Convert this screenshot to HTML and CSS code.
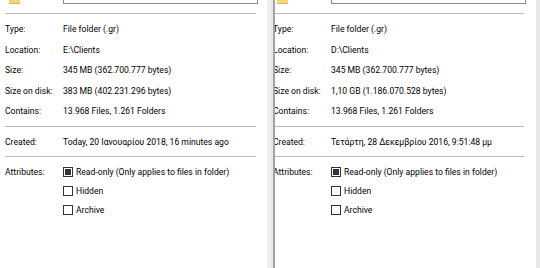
FILE: index.html
```html
<!DOCTYPE html>
<html lang="en">
<head>
    <meta charset="UTF-8">
    <title>Folder Properties</title>
    <link rel="stylesheet" href="styles.css">
</head>
<body>
    <div class="window">
        <!-- Left: E:\Clients -->
        <div class="panel">
            <div class="inner">
                <div class="head">
                    <div class="folder"></div>
                    <div class="namebox"></div>
                </div>
                <div class="line"></div>
                <div class="group">
                    <div class="row"><span class="label">Type:</span><span>File folder (.gr)</span></div>
                    <div class="row"><span class="label">Location:</span><span>E:\Clients</span></div>
                    <div class="row"><span class="label">Size:</span><span>345 MB (362.700.777 bytes)</span></div>
                    <div class="row"><span class="label">Size on disk:</span><span>383 MB (402.231.296 bytes)</span></div>
                    <div class="row"><span class="label">Contains:</span><span>13.968 Files, 1.261 Folders</span></div>
                </div>
                <div class="line"></div>
                <div class="group">
                    <div class="row"><span class="label">Created:</span><span>Today, 20 Ιανουαρίου 2018, 16 minutes ago</span></div>
                </div>
                <div class="line"></div>
                <div class="attrs">
                    <span class="label">Attributes:</span>
                    <div class="checks">
                        <div class="check"><span class="box mixed"></span>Read-only (Only applies to files in folder)</div>
                        <div class="check"><span class="box"></span>Hidden</div>
                        <div class="check"><span class="box"></span>Archive</div>
                    </div>
                </div>
            </div>
        </div>

        <div class="splitter"></div>

        <!-- Right: D:\Clients -->
        <div class="panel right">
            <div class="inner">
                <div class="head">
                    <div class="folder"></div>
                    <div class="namebox"></div>
                </div>
                <div class="line"></div>
                <div class="group">
                    <div class="row"><span class="label">Type:</span><span>File folder (.gr)</span></div>
                    <div class="row"><span class="label">Location:</span><span>D:\Clients</span></div>
                    <div class="row"><span class="label">Size:</span><span>345 MB (362.700.777 bytes)</span></div>
                    <div class="row"><span class="label">Size on disk:</span><span>1,10 GB (1.186.070.528 bytes)</span></div>
                    <div class="row"><span class="label">Contains:</span><span>13.968 Files, 1.261 Folders</span></div>
                </div>
                <div class="line"></div>
                <div class="group">
                    <div class="row"><span class="label">Created:</span><span>Τετάρτη, 28 Δεκεμβρίου 2016, 9:51:48 μμ</span></div>
                </div>
                <div class="line"></div>
                <div class="attrs">
                    <span class="label">Attributes:</span>
                    <div class="checks">
                        <div class="check"><span class="box mixed"></span>Read-only (Only applies to files in folder)</div>
                        <div class="check"><span class="box"></span>Hidden</div>
                        <div class="check"><span class="box"></span>Archive</div>
                    </div>
                </div>
            </div>
        </div>

        <div class="edge"></div>
    </div>
</body>
</html>
```

FILE: styles.css
```css
body {
    margin: 0;
    background: #fff;
    font-family: Roboto, "Noto Sans", sans-serif;
    font-size: 8.6px;
    color: #000;
}

.window {
    display: flex;
    height: 268px;
    overflow: hidden;
}

.panel {
    width: 267px;
    overflow: hidden;
    flex-shrink: 0;
}

.panel.right {
    width: 261px;
}

.panel.right .inner {
    margin-left: -7px;
}

.inner {
    width: 267px;
}

.splitter {
    width: 8px;
    flex-shrink: 0;
    background: linear-gradient(to right, #f4f4f4 0, #e9e9e9 2px, #f1f1f1 3px, #e6e6e6 5px, #ededed 6px, #a2a2a2 6px, #a2a2a2 8px);
}

.edge {
    width: 4px;
    flex-shrink: 0;
    background: #e8e8e8;
}

.head {
    height: 4px;
    display: flex;
    align-items: flex-end;
}

.folder {
    width: 11px;
    height: 4px;
    margin-left: 9px;
    background: #f5d57a;
    border-bottom: 1px solid #e2b84c;
    box-sizing: border-box;
}

.namebox {
    width: 195px;
    height: 20px;
    margin-left: 43px;
    border: 1px solid #8a8a8a;
    box-sizing: border-box;
    flex-shrink: 0;
}

.line {
    width: 251px;
    height: 1px;
    margin-left: 5px;
    background: #b9b9b9;
}

.head + .line {
    margin-top: 9px;
}

.group {
    padding: 5px 0 4px;
}

.row {
    display: flex;
    height: 20.5px;
    line-height: 20.5px;
    white-space: nowrap;
}

.label {
    width: 58px;
    padding-left: 5px;
    flex-shrink: 0;
}

.attrs {
    display: flex;
    padding-top: 6px;
    white-space: nowrap;
}

.attrs .label {
    line-height: 19px;
}

.check {
    display: flex;
    align-items: center;
    height: 18.7px;
}

.box {
    width: 10px;
    height: 10px;
    margin-right: 3px;
    border: 1px solid #333;
    box-sizing: border-box;
    background: #fff;
    display: flex;
    align-items: center;
    justify-content: center;
}

.box.mixed::after {
    content: "";
    width: 6px;
    height: 6px;
    background: #333;
}
```
